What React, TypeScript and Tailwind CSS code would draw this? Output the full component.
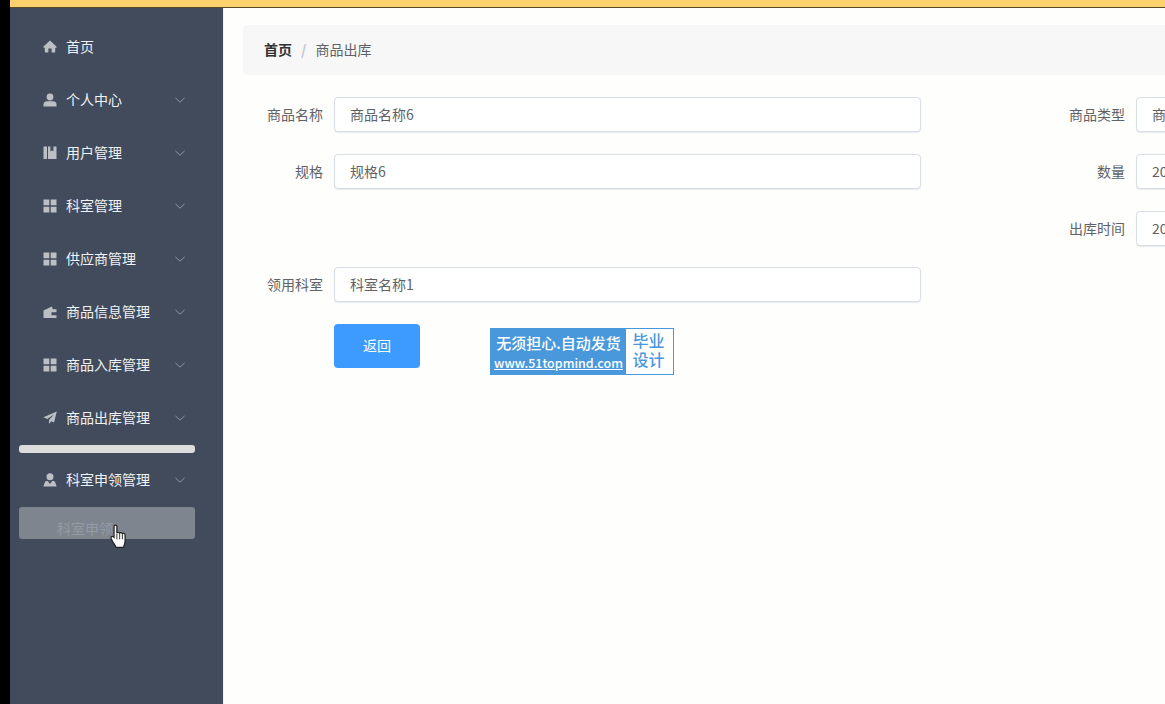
import React from 'react';

type IconKind = 'home' | 'user' | 'book' | 'grid' | 'wallet' | 'plane' | 'applicant';

// small filled glyphs from the admin template's icon font
const MenuIcon = ({ kind }: { kind: IconKind }) => (
  <svg width="14" height="14" viewBox="0 0 14 14" fill="#bcbfc4" className="shrink-0">
    {kind === 'home' && <path d="M7 .5 13.500 6.600v1.100H12.200V12.500H8.600V8.600H5.400v3.900H1.800V7.700H.5V6.600Z" />}
    {kind === 'user' && (
      <>
        <circle cx="7" cy="4" r="3.400" />
        <path d="M.5 13.500v-2.200C.5 9.400 2.200 8.300 4 8.300h6c1.800 0 3.500 1.100 3.500 3v2.200Z" />
      </>
    )}
    {kind === 'book' && <path d="M.5 .5h3.500v12.500H.5ZM5 .5h2.400v5l1.500-1.300 1.500 1.300v-5h3.100v12.500H5Z" />}
    {kind === 'grid' && <path d="M.5 .5h5.800v5.800H.5ZM7.700 .5h5.800v5.800H7.700ZM.5 7.700h5.800v5.800H.5ZM7.700 7.700h5.800v5.800H7.700Z" />}
    {kind === 'wallet' && <path d="M.5 5.500 8.800 1.500l1.200 2.800h3.500v8.700H.5ZM8.500 7.300v2.900h5V7.300Z" />}
    {kind === 'plane' && <path d="M13.800 .6 .4 6.200l3.800 1.900L11 3.400 6 9v4l2.200-2.700 2.800 1.300Z" />}
    {kind === 'applicant' && (
      <>
        <circle cx="7" cy="3.800" r="3.500" />
        <path d="M.3 13.500 1.900 9.200c.3-.8 1-1.300 1.900-1.300h1L7 11l2.200-3.100h1c.9 0 1.600.5 1.900 1.300l1.600 4.300Z" />
      </>
    )}
  </svg>
);

const Chevron = () => (
  <svg width="12" height="12" viewBox="0 0 12 12" fill="none" stroke="#8f96a3" strokeWidth="1" className="shrink-0">
    <path d="M1.500 4 6 8.200 10.500 4" />
  </svg>
);

const MenuRow = ({ icon, label, arrow = true }: { icon: IconKind; label: string; arrow?: boolean }) => (
  <div className="flex h-[53px] items-center pl-[33px] pr-[37px] text-[14px] text-[#f0f2f5]">
    <MenuIcon kind={icon} />
    <span className="ml-[9px] flex-1">{label}</span>
    {arrow && <Chevron />}
  </div>
);

const Field = ({ label, value, className = '' }: { label: string; value: string; className?: string }) => (
  <div className={`flex w-[678px] items-center ${className}`}>
    <label className="w-[80px] pb-px text-right text-[14px] text-[#606266]">{label}</label>
    <div className="ml-[11px] flex h-[35px] w-[587px] items-center rounded border border-[#d8dde6] bg-white pb-px pl-[15px] text-[14px] text-[#606266] shadow-[0_1px_1px_#e8eaee]">
      {value}
    </div>
  </div>
);

export default function App() {
  return (
    <div className="relative flex h-[704px] w-[1165px] overflow-hidden bg-black font-['Noto_Sans_CJK_SC','Noto_Sans',sans-serif]">
      <div className="w-[10px] shrink-0" />
      <div className="flex min-w-0 flex-1 flex-col">
        <div className="h-2 shrink-0 border-b border-[#5c4a22] bg-[#fdd26e]" />
        <div className="flex min-h-0 flex-1">
          <aside className="w-[213px] shrink-0 bg-[#414b5c] pt-3">
            <MenuRow icon="home" label="首页" arrow={false} />
            <MenuRow icon="user" label="个人中心" />
            <MenuRow icon="book" label="用户管理" />
            <MenuRow icon="grid" label="科室管理" />
            <MenuRow icon="grid" label="供应商管理" />
            <MenuRow icon="wallet" label="商品信息管理" />
            <MenuRow icon="grid" label="商品入库管理" />
            <MenuRow icon="plane" label="商品出库管理" />
            <div className="mx-[9px] mt-px h-2 w-[176px] rounded-[3px] bg-[#dcdcdc]" />
            <MenuRow icon="applicant" label="科室申领管理" />
            <div className="mx-[9px] mt-px flex h-8 w-[176px] items-center rounded-[3px] bg-[#7e858f] pl-[38px] pt-[10px] text-[14px] text-[#959aa3]">
              科室申领
            </div>
          </aside>
          <main className="min-w-0 flex-1 border-l border-[#f0f0f0] bg-[#fefefd] pl-[19px] pt-[17px]">
            <div className="flex h-[50px] w-[1200px] items-center rounded bg-[#f7f7f7] pb-[2px] pl-[21px] text-[14px]">
              <span className="font-bold text-[#303133]">首页</span>
              <span className="ml-[9px] mr-[9px] font-bold text-[#c0c4cc]">/</span>
              <span className="text-[#606266]">商品出库</span>
            </div>
            <div className="mt-[22px] grid w-[1480px] grid-cols-[678px_678px] gap-x-[124px] gap-y-[22px]">
              <Field label="商品名称" value="商品名称6" />
              <Field label="商品类型" value="商品类型" />
              <Field label="规格" value="规格6" />
              <Field label="数量" value="20" />
              <div />
              <Field label="出库时间" value="2021-03-08" />
              <Field label="领用科室" value="科室名称1" className="-mt-px" />
            </div>
            <div className="mt-[22px] flex items-start pl-[91px]">
              <button className="h-[44px] w-[86px] rounded bg-[#3d9bff] pb-px text-[14px] text-white">返回</button>
              <div className="ml-[70px] mt-1 flex h-[47px] w-[184px] bg-[#4a98dc] p-px">
                <div className="flex w-[135px] flex-col items-center justify-center pt-[2px] text-white">
                  <span className="text-[15px] font-medium leading-[21px]">无须担心.自动发货</span>
                  <span className="text-[12.500px] font-medium leading-[20px] underline">www.51topmind.com</span>
                </div>
                <div className="flex-1 bg-white pr-[2px] pt-[2px] text-center text-[16px] font-medium leading-[19px] text-[#4a98dc]">
                  毕业
                  <br />
                  设计
                </div>
              </div>
            </div>
          </main>
        </div>
      </div>
      <svg width="18" height="25" viewBox="0 0 16 22" className="absolute left-[110px] top-[524px]">
        <path
          d="M3.600 2c0-1.600 2.500-1.600 2.500 0v6c.4-1 2.200-1 2.500.2.400-.9 2.200-.8 2.400.4.500-.7 2.300-.5 2.400 1v5.400c0 2.500-1 3.700-1.400 5.700H5.300C4.700 18.700 3.900 18 2.600 16L1 12.800c-.8-1.500 1-2.700 2.600-1.100Z"
          fill="#fff"
          stroke="#222"
          strokeWidth="1.100"
        />
        <path d="M6.100 8.500v5M8.600 9v4.500M11 9.500v4" stroke="#222" strokeWidth="0.800" />
      </svg>
    </div>
  );
}
